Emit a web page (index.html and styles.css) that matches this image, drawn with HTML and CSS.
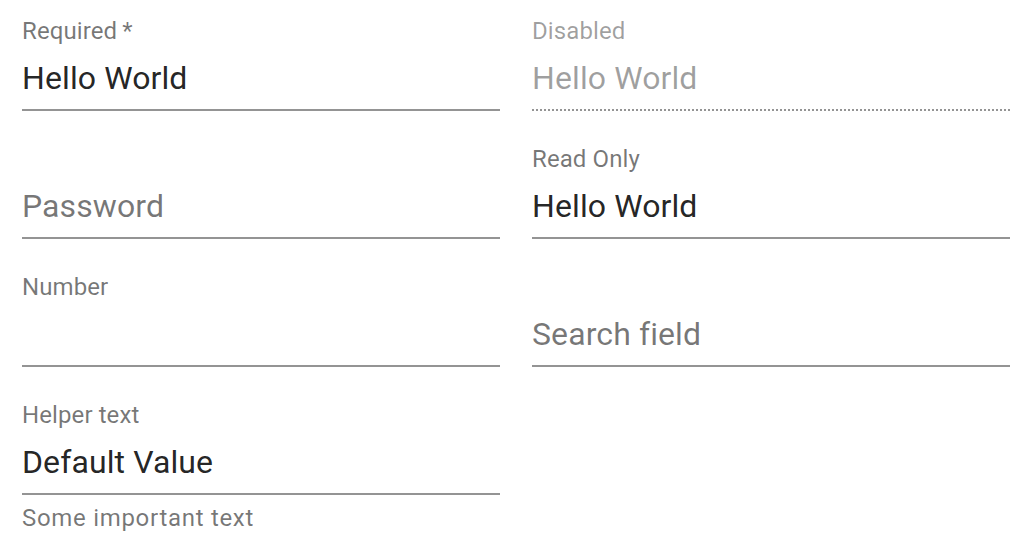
FILE: index.html
```html
<!DOCTYPE html>
<html lang="en">
<head>
<meta charset="utf-8">
<title>Text fields</title>
<link rel="stylesheet" href="styles.css">
</head>
<body>
<form class="form" autocomplete="off">
  <div class="field">
    <label class="label" for="f-required">Required<span class="asterisk">&thinsp;*</span></label>
    <input class="input" id="f-required" type="text" value="Hello World" required>
  </div>
  <div class="field">
    <label class="label label-disabled" for="f-disabled">Disabled</label>
    <input class="input input-disabled" id="f-disabled" type="text" value="Hello World" disabled>
  </div>
  <div class="field">
    <div class="label"></div>
    <input class="input" id="f-password" type="password" placeholder="Password" aria-label="Password">
  </div>
  <div class="field">
    <label class="label" for="f-readonly">Read Only</label>
    <input class="input" id="f-readonly" type="text" value="Hello World" readonly>
  </div>
  <div class="field">
    <label class="label" for="f-number">Number</label>
    <input class="input" id="f-number" type="number">
  </div>
  <div class="field">
    <div class="label"></div>
    <input class="input" id="f-search" type="search" placeholder="Search field" aria-label="Search field">
  </div>
  <div class="field">
    <label class="label" for="f-helper">Helper text</label>
    <input class="input" id="f-helper" type="text" value="Default Value">
    <p class="helper">Some important text</p>
  </div>
</form>
</body>
</html>
```

FILE: styles.css
```css
* {
  box-sizing: border-box;
}

html, body {
  margin: 0;
  padding: 0;
  background: #ffffff;
}

body {
  font-family: Roboto, "Liberation Sans", Arial, sans-serif;
  color: rgba(0, 0, 0, 0.87);
}

.form {
  display: grid;
  grid-template-columns: 478px 478px;
  column-gap: 32px;
  row-gap: 32px;
  align-items: start;
  padding: 15px 0 0 22px;
}

.field {
  display: flex;
  flex-direction: column;
  min-width: 0;
}

.label {
  display: block;
  height: 32px;
  padding-top: 4px;
  font-size: 24px;
  line-height: 24px;
  letter-spacing: 0.1px;
  color: rgba(0, 0, 0, 0.54);
  white-space: nowrap;
}

.label-disabled {
  color: rgba(0, 0, 0, 0.38);
}

.input {
  display: block;
  width: 100%;
  box-sizing: content-box;
  height: 38px;
  margin: 0;
  padding: 12px 0 12px;
  border: none;
  border-bottom: 2px solid rgba(0, 0, 0, 0.42);
  border-radius: 0;
  background: transparent;
  font-family: inherit;
  font-size: 32px;
  line-height: 38px;
  letter-spacing: 0.1px;
  color: rgba(0, 0, 0, 0.87);
  outline: none;
  -webkit-appearance: none;
  appearance: none;
}

.input::placeholder {
  color: rgba(0, 0, 0, 0.54);
  opacity: 1;
}

.input::-webkit-outer-spin-button,
.input::-webkit-inner-spin-button,
.input::-webkit-search-cancel-button,
.input::-webkit-search-decoration {
  -webkit-appearance: none;
  margin: 0;
}

.input-disabled {
  border-bottom: none;
  padding-bottom: 14px;
  color: rgba(0, 0, 0, 0.38);
  -webkit-text-fill-color: rgba(0, 0, 0, 0.38);
  background-image: repeating-linear-gradient(to right, rgba(0, 0, 0, 0.42) 0 2px, transparent 2px 4px);
  background-repeat: no-repeat;
  background-position: left bottom;
  background-size: 100% 2px;
  opacity: 1;
}

.helper {
  margin: 4px 0 0;
  font-size: 24px;
  line-height: 1.66;
  letter-spacing: 0.7px;
  color: rgba(0, 0, 0, 0.54);
}
```
